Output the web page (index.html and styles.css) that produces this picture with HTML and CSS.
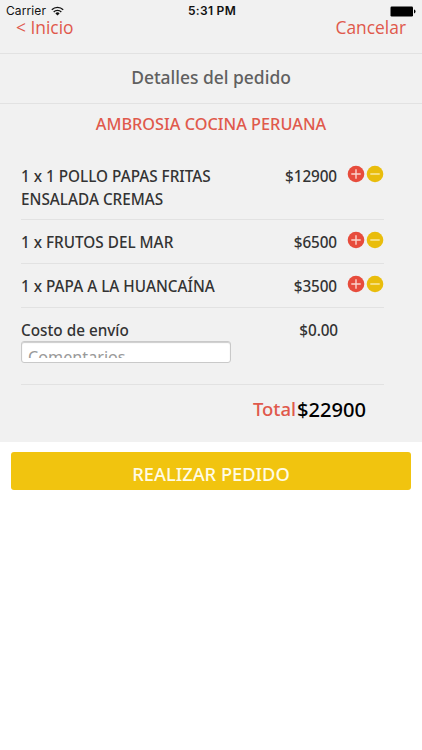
FILE: index.html
```html
<!DOCTYPE html>
<html lang="es">
<head>
<meta charset="utf-8">
<title>Detalles del pedido</title>
<link rel="stylesheet" href="styles.css">
</head>
<body>
<svg class="sprite" aria-hidden="true">
  <symbol id="plus" viewBox="0 0 18 18"><circle cx="9" cy="9" r="8.3" fill="#e74c3c"/><path d="M4.3 9h9.4M9 4.3v9.4" stroke="#fbd5cc" stroke-width="1.4"/></symbol>
  <symbol id="minus" viewBox="0 0 18 18"><circle cx="9" cy="9" r="8.3" fill="#e9bd0c"/><path d="M4.3 9h9.4" stroke="#fbedae" stroke-width="1.4"/></symbol>
</svg>
<main class="order">
  <header class="top">
    <div class="status">
      <div class="carrier"><span>Carrier</span><svg class="wifi" viewBox="0 0 13 10"><path d="M.8 3.7a8.2 8.2 0 0 1 11.4 0M2.7 5.9a5.4 5.4 0 0 1 7.6 0" fill="none" stroke="#111" stroke-width="1.4"/><path d="M6.5 9.6 4.4 7.4a3 3 0 0 1 4.2 0z" fill="#111"/></svg></div>
      <span class="time">5:31 PM</span>
      <svg class="battery" viewBox="0 0 26 11"><rect x=".5" y=".5" width="22.5" height="10" rx="1.2"/><path d="M24 3.6q1.5.2 1.5 1.9T24 7.4z"/></svg>
    </div>
    <nav class="nav"><span class="back">&lt; Inicio</span><span class="cancel">Cancelar</span></nav>
  </header>
  <div class="heading"><h1>Detalles del pedido</h1></div>
  <h2>AMBROSIA COCINA PERUANA</h2>
  <section class="items">
    <div class="row tall"><span class="name">1 x 1 POLLO PAPAS FRITAS<br>ENSALADA CREMAS</span><span class="price">$12900</span><span class="actions"><svg><use href="#plus"/></svg><svg><use href="#minus"/></svg></span></div>
    <div class="row"><span class="name">1 x FRUTOS DEL MAR</span><span class="price">$6500</span><span class="actions"><svg><use href="#plus"/></svg><svg><use href="#minus"/></svg></span></div>
    <div class="row"><span class="name">1 x PAPA A LA HUANCAÍNA</span><span class="price">$3500</span><span class="actions"><svg><use href="#plus"/></svg><svg><use href="#minus"/></svg></span></div>
    <div class="shipping">
      <div class="cost"><span class="name">Costo de envío</span><span class="price">$0.00</span></div>
      <div class="comments"><div class="clip">Comentarios</div></div>
    </div>
  </section>
  <div class="total"><span class="label">Total</span><span class="sum">$22900</span></div>
</main>
<div class="submit">REALIZAR PEDIDO</div>
</body>
</html>
```
FILE: styles.css
```css
* { box-sizing: border-box; }
body { margin: 0; background: #fff; font-family: "Noto Sans", "Open Sans", sans-serif; color: #333; }
.sprite { display: none; }
.order { height: 442px; background: #f1f1f1; }
.top { height: 54px; border-bottom: 1px solid #e2e2e2; }
.status { display: grid; grid-template-columns: 1fr auto 1fr; height: 17px; padding: 4px 6px 0; align-items: center; font: 12px/14px Inter, sans-serif; color: #111; }
.carrier { display: flex; align-items: center; gap: 5px; letter-spacing: .1px; }
.wifi { width: 13px; height: 10px; }
.time { font-weight: 600; letter-spacing: .3px; padding-left: 2px; }
.battery { width: 26px; height: 11px; justify-self: end; fill: #000; }
.nav { display: flex; justify-content: space-between; padding: 0 16px; font-family: "Open Sans", sans-serif; font-size: 17.4px; line-height: 20px; color: #e0594c; }
.heading { height: 50px; border-bottom: 1px solid #e2e2e2; }
h1, h2, .items, .total, .submit { font-weight: 500; }
h1 { margin: 0; text-align: center; font-size: 17.45px; line-height: 47px; color: #606060; }
h2 { margin: 0; height: 49px; padding-top: 8px; text-align: center; font-size: 16.3px; line-height: 24px; color: #e0594c; }
.items { width: 363px; margin-left: 21px; font-size: 15.3px; line-height: 22.5px; }
.row { display: flex; height: 44px; padding-top: 11px; border-bottom: 1px solid #e2e2e2; }
.row.tall { height: 67px; padding-top: 12px; }
.name { width: 230px; white-space: nowrap; }
.price { width: 87px; text-align: right; letter-spacing: -.1px; }
.actions { display: flex; gap: 1px; margin-left: 10px; }
.actions svg { width: 18px; height: 18px; }
.shipping { height: 77px; padding-top: 11px; border-bottom: 1px solid #e2e2e2; }
.cost { display: flex; height: 22px; }
.comments { width: 210px; height: 22px; background: #fff; border: 1px solid #c9c9c9; border-radius: 3px; box-shadow: inset 0 1px 1px #ccc; padding: 6px 6px 4px; }
.clip { height: 10px; overflow: hidden; color: #999; font-size: 16.2px; font-weight: 400; line-height: 18px; }
.total { display: flex; justify-content: flex-end; padding: 9px 56px 0 0; line-height: 30px; }
.label { color: #e0594c; font-size: 18.5px; margin-right: 1px; }
.sum { color: #000; font-size: 20.1px; line-height: 32px; }
.submit { height: 38px; margin: 10px 11px 0; border-radius: 3px; background: #f1c40f; color: #fffbe5; text-align: center; font-size: 18.3px; line-height: 43px; }
```
